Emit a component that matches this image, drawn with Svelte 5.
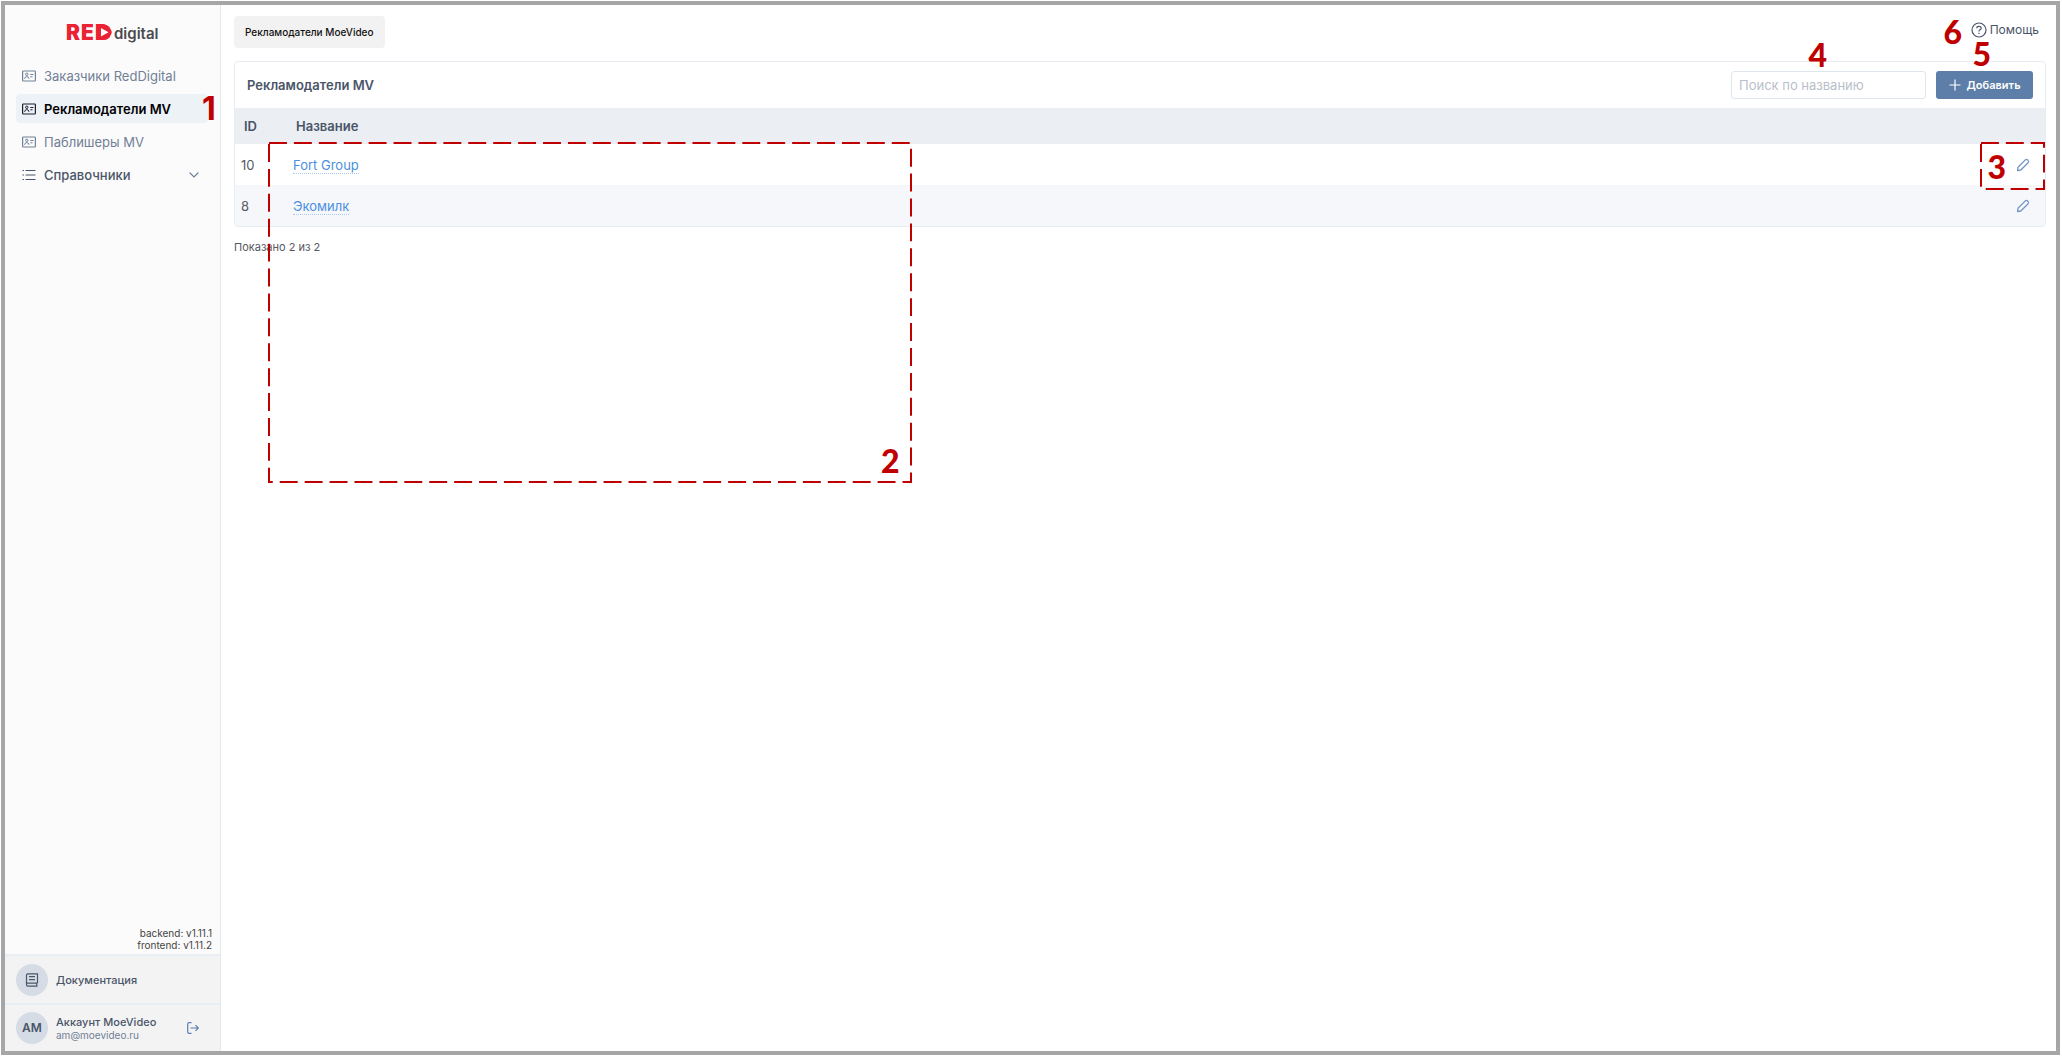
<script>
  const nav = [
    { label: 'Заказчики RedDigital' },
    { label: 'Рекламодатели MV', active: true },
    { label: 'Паблишеры MV' },
  ];
  const rows = [
    { id: 10, name: 'Fort Group' },
    { id: 8, name: 'Экомилк' },
  ];
  let query = $state('');
</script>

{#snippet pencil()}
  <svg width="14" height="14" viewBox="0 0 14 14" fill="none" stroke="currentColor" stroke-width="1.3" stroke-linejoin="round">
    <path d="M1.5 12.5 L2 9.2 L9.3 1.9 Q10.6 .8 11.9 2.1 Q13.2 3.4 12.1 4.7 L4.8 12 Z" />
  </svg>
{/snippet}

<div class="page">
  <aside class="sidebar">
    <a class="logo" href="#home" aria-label="RED digital">
      <svg width="96" height="28" viewBox="0 0 96 28">
        <text class="logo-red" y="20"><tspan x="0">R</tspan><tspan x="15">E</tspan><tspan x="29">D</tspan></text>
        <path d="M31 4.500 H38 Q41 4.500 43.500 7 L45.500 11 Q46 12.300 45.500 13.500 L43.500 17.500 Q41 20 38 20 H31 Z" fill="#eb2233" />
        <path d="M35 8 L42.500 12.300 L35 16.600 Z" fill="#fff" />
        <text class="logo-digital" x="48" y="19">digital</text>
      </svg>
    </a>
    <nav class="nav">
      {#each nav as item}
        <a class="nav-item" class:active={item.active} href="#list">
          <svg width="14" height="14" viewBox="0 0 14 14" fill="none" stroke="currentColor">
            <rect x=".6" y="2" width="12.800" height="10" rx=".8" stroke-width="1.200" />
            <circle cx="4.800" cy="5.300" r="1.200" />
            <path d="M2.600 9.800 Q2.800 7.600 4.800 7.600 Q6.800 7.600 7 9.800 M8.300 5.500 H11.500 M8.300 7.800 H10.500" />
          </svg>
          <span>{item.label}</span>
        </a>
      {/each}
      <button class="nav-item group" type="button">
        <svg width="14" height="14" viewBox="0 0 14 14" fill="none" stroke="currentColor">
          <path d="M3.500 2.500 H13.500 M3.500 7 H13.500 M3.500 11.500 H13.500 M.5 2.500 H2 M.5 7 H2 M.5 11.500 H2" stroke-width="1.200" />
        </svg>
        <span class="grow">Справочники</span>
        <svg class="chevron" width="10" height="10" viewBox="0 0 10 10" fill="none" stroke="currentColor" stroke-width="1.200">
          <path d="M1 3 L5 7 L9 3" stroke-linecap="round" />
        </svg>
      </button>
    </nav>
    <div class="versions">
      <div>backend: v1.11.1</div>
      <div>frontend: v1.11.2</div>
    </div>
    <a class="foot" href="#docs">
      <span class="avatar">
        <svg width="14" height="14" viewBox="0 0 14 14" fill="none" stroke="currentColor" stroke-width="1.200">
          <path d="M12.500 10 V.800 H2.800 Q1.500 .800 1.500 2.200 V11.600 Q1.500 13.200 3 13.200 H12.500 M1.700 10.200 H12.500 M11.800 10.200 V13.200 M4 3.700 H10 M4 6.700 H10" />
        </svg>
      </span>
      <span class="foot-title">Документация</span>
    </a>
    <div class="foot">
      <span class="avatar">AM</span>
      <div class="grow">
        <div class="foot-title">Аккаунт MoeVideo</div>
        <div class="mail">am@moevideo.ru</div>
      </div>
      <button class="logout" type="button" aria-label="Выйти">
        <svg width="12" height="12" viewBox="0 0 12 12" fill="none" stroke="currentColor" stroke-width="1.200">
          <path d="M4.500 .600 H2 Q.700 .600 .700 2 V10 Q.700 11.400 2 11.400 H4.500 M3.500 6 H11.300 M8.500 3.200 L11.300 6 L8.500 8.800" />
        </svg>
      </button>
    </div>
  </aside>

  <main class="main">
    <header class="top">
      <div class="crumb">Рекламодатели MoeVideo</div>
      <a class="help" href="#help">
        <svg width="16" height="16" viewBox="0 0 16 16" fill="none" stroke="currentColor" stroke-width="1.200">
          <circle cx="8" cy="8" r="7" />
          <path d="M5.800 6.300 Q5.800 4.300 8 4.300 Q10.200 4.300 10.200 6.200 Q10.200 7.300 9 7.800 Q8 8.200 8 9.400 M8 10.700 V12" />
        </svg>
        Помощь
      </a>
    </header>

    <section class="card">
      <div class="card-head">
        <h1>Рекламодатели MV</h1>
        <input class="search" type="text" placeholder="Поиск по названию" aria-label="Поиск по названию" bind:value={query} />
        <button class="add" type="button">
          <svg width="12" height="12" viewBox="0 0 12 12" stroke="currentColor" stroke-width="1.200"><path d="M6 .500 V11.500 M.500 6 H11.500" /></svg>
          Добавить
        </button>
      </div>
      <table>
        <thead>
          <tr><th class="col-id">ID</th><th>Название</th><th class="col-edit"></th></tr>
        </thead>
        <tbody>
          {#each rows as row}
            <tr>
              <td>{row.id}</td>
              <td><a class="link" href="#item">{row.name}</a></td>
              <td class="col-edit"><button class="edit" type="button" aria-label="Изменить">{@render pencil()}</button></td>
            </tr>
          {/each}
        </tbody>
      </table>
    </section>
    <p class="shown">Показано 2 из 2</p>
  </main>

  <svg class="outline o2" width="644" height="341" viewBox="0 0 644 341">
    <path d="M1 1 H643 V340 H1 Z" pathLength="1969" />
  </svg>
  <svg class="outline o3" width="66" height="49" viewBox="0 0 66 49">
    <path d="M1 1 H64 V47 H1 Z" pathLength="219" />
  </svg>
  <span class="mark m1">1</span>
  <span class="mark m2">2</span>
  <span class="mark m3">3</span>
  <span class="mark m4">4</span>
  <span class="mark m5">5</span>
  <span class="mark m6">6</span>
</div>

<style>
  :global(body) { margin: 0; background: #fff; }
  .page, .page * { box-sizing: border-box; }
  .page {
    position: relative;
    display: flex;
    min-height: calc(100vh - 2px);
    margin: 1px 2px 1px 1px;
    border: 4px solid #a5a6a5;
    background: #fff;
    font: 13px/20px Inter, "Noto Sans", sans-serif;
    color: #4a5568;
  }
  a { color: inherit; text-decoration: none; }
  button { font: inherit; color: inherit; background: none; border: 0; padding: 0; margin: 0; cursor: pointer; }
  svg { display: block; flex: none; overflow: visible; }
  .grow { flex: 1; }

  .sidebar {
    display: flex;
    flex-direction: column;
    width: 216px;
    flex: none;
    background: #fbfbfb;
    border-right: 1px solid #e2e8f0;
  }
  .logo { align-self: flex-start; padding: 15px 0 13px 61px; }
  .logo-red { font: 900 21px Inter, sans-serif; fill: #eb2233; }
  .logo-digital { font: 600 15px Inter, sans-serif; fill: #4a4a4f; }
  .nav { display: flex; flex-direction: column; gap: 4px; padding: 0 12px 0 11px; }
  .nav-item {
    display: flex;
    align-items: center;
    gap: 8px;
    height: 29px;
    padding: 0 9px 0 6px;
    border-radius: 4px;
    color: #718096;
    text-align: left;
    width: 100%;
  }
  .nav-item.active { background: #edf2f7; color: #1a202c; font-weight: 600; }
  .nav-item.active span { color: #000; }
  .nav-item.group { color: #4a5568; font-weight: 500; }
  .nav-item .chevron { color: #718096; }
  .versions {
    margin-top: auto;
    padding: 0 8px 3px;
    font-size: 10px;
    line-height: 12px;
    text-align: right;
    color: #444;
  }
  .foot {
    display: flex;
    align-items: center;
    gap: 8px;
    height: 49px;
    padding: 0 21px 0 11px;
    background: #f3f3f3;
    border-top: 2px solid #e8eef3;
    font-size: 11px;
    line-height: 14px;
  }
  .foot:last-child { height: 48px; }
  .foot-title { font-weight: 500; color: #4a5568; }
  .mail { font-size: 10px; line-height: 12px; color: #718096; }
  .avatar {
    display: grid;
    place-items: center;
    width: 32px;
    height: 32px;
    border-radius: 50%;
    background: #d5dce6;
    font-size: 12px;
    font-weight: 600;
    color: #4a5568;
  }
  .logout { color: #5b80b0; }

  .main { flex: 1; min-width: 0; padding: 11px 10px 0 13px; }
  .top { display: flex; justify-content: space-between; height: 45px; }
  .crumb {
    height: 32px;
    padding: 0 11px;
    border-radius: 4px;
    background: #f2f2f2;
    font-size: 10px;
    font-weight: 500;
    line-height: 33px;
    color: #111;
  }
  .help { display: flex; align-items: center; gap: 3px; height: 27px; padding-right: 7px; font-size: 12px; }
  .card { border: 1px solid #e6ecf2; border-radius: 4px; overflow: hidden; }
  .card-head { display: flex; align-items: center; gap: 10px; height: 46px; padding: 0 12px; }
  h1 { flex: 1; margin: 0; font-size: 13px; line-height: 20px; font-weight: 600; }
  .search {
    width: 195px;
    height: 28px;
    padding: 0 7px;
    border: 1px solid #dfe5ee;
    border-radius: 3px;
    background: #fff;
    font: inherit;
    color: #4a5568;
    outline: 0;
  }
  .search::placeholder { color: #b8bfca; opacity: 1; }
  .add {
    display: flex;
    align-items: center;
    justify-content: center;
    gap: 6px;
    width: 97px;
    height: 28px;
    border-radius: 3px;
    background: #5c7ea8;
    color: #fff;
    font-size: 11px;
    font-weight: 600;
  }
  table { width: 100%; border-collapse: collapse; table-layout: fixed; }
  th { height: 36px; padding: 0 9px; text-align: left; font-weight: 600; background: #ebeef3; }
  td { height: 41px; padding: 0 6px; color: #555a63; }
  .col-id { width: 52px; }
  .col-edit { width: 60px; padding-right: 15px; }
  tbody tr:nth-child(even) { background: #f6f7fb; }
  .link { color: #4a90e2; border-bottom: 1px dotted #a9cbf0; }
  .edit { display: block; margin-left: auto; color: #7295c2; }
  .shown { margin: 12px 0 0; font-size: 11px; line-height: 16px; color: #55585e; }

  .outline { position: absolute; fill: none; stroke: #c00000; stroke-width: 2; stroke-dasharray: 18 7; }
  .o2 { left: 263px; top: 137px; }
  .o3 { right: 10px; top: 137px; }
  .mark { position: absolute; font: 900 32px/32px Lato, sans-serif; color: #c00000; }
  .m1 { left: 197px; top: 88px; font-family: Inter, sans-serif; font-weight: 700; }
  .m2 { left: 876px; top: 440px; }
  .m3 { right: 50px; top: 146px; }
  .m4 { right: 229px; top: 34px; }
  .m5 { right: 65px; top: 33px; }
  .m6 { right: 94px; top: 11px; }
</style>
